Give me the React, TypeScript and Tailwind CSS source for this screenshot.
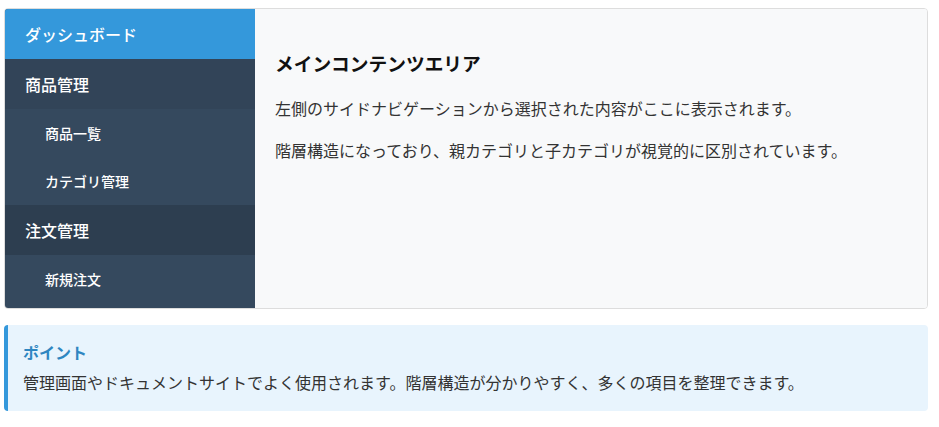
import React from 'react';

type NavItem = {
  label: string;
  children?: string[];
  active?: boolean;
  bg?: string;
};

const NAV: NavItem[] = [
  { label: 'ダッシュボード', active: true },
  { label: '商品管理', children: ['商品一覧', 'カテゴリ管理'], bg: 'bg-[#324458]' },
  { label: '注文管理', children: ['新規注文'], bg: 'bg-[#2d3e50]' },
];

export default function App() {
  return (
    <div className="min-h-screen bg-white pl-[4px] pt-[8px] text-[#333] font-['Noto_Sans_CJK_JP',sans-serif]">
      <div className="flex w-[924px] overflow-hidden rounded-[4px] border border-[#ddd]">
        {/* sidebar */}
        <nav className="w-[250px] shrink-0 bg-[#35495e] pb-[5px] font-medium text-white">
          {NAV.map(item => (
            <div key={item.label}>
              <div
                className={
                  item.active
                    ? 'flex h-[50px] items-center bg-[#3498db] px-[20px] text-[16px]'
                    : `flex h-[50px] items-center px-[20px] text-[16px] ${item.bg}`
                }
              >
                {item.label}
              </div>
              {item.children?.map(c => (
                <div key={c} className="flex h-[48px] items-center pl-[40px] text-[14px]">
                  {c}
                </div>
              ))}
            </div>
          ))}
        </nav>

        {/* main */}
        <main className="flex-1 bg-[#f8f9fa] p-[20px]">
          <h3 className="mt-[18.72px] mb-[18.72px] text-[18.72px] font-bold leading-[1.6] text-[#111]">
            メインコンテンツエリア
          </h3>
          <p className="mb-[16px] text-[16px] leading-[1.6]">
            左側のサイドナビゲーションから選択された内容がここに表示されます。
          </p>
          <p className="text-[16px] leading-[1.6]">
            階層構造になっており、親カテゴリと子カテゴリが視覚的に区別されています。
          </p>
        </main>
      </div>

      <div className="mt-[16px] w-[924px] rounded-[4px] border-l-[4px] border-[#3498db] bg-[#e8f4fd] px-[15px] pt-[15px] pb-[16px]">
        <div className="mb-[4px] text-[16px] font-bold leading-[1.6] text-[#2e86c1]">ポイント</div>
        <p className="text-[16px] leading-[1.6]">
          管理画面やドキュメントサイトでよく使用されます。階層構造が分かりやすく、多くの項目を整理できます。
        </p>
      </div>
    </div>
  );
}
